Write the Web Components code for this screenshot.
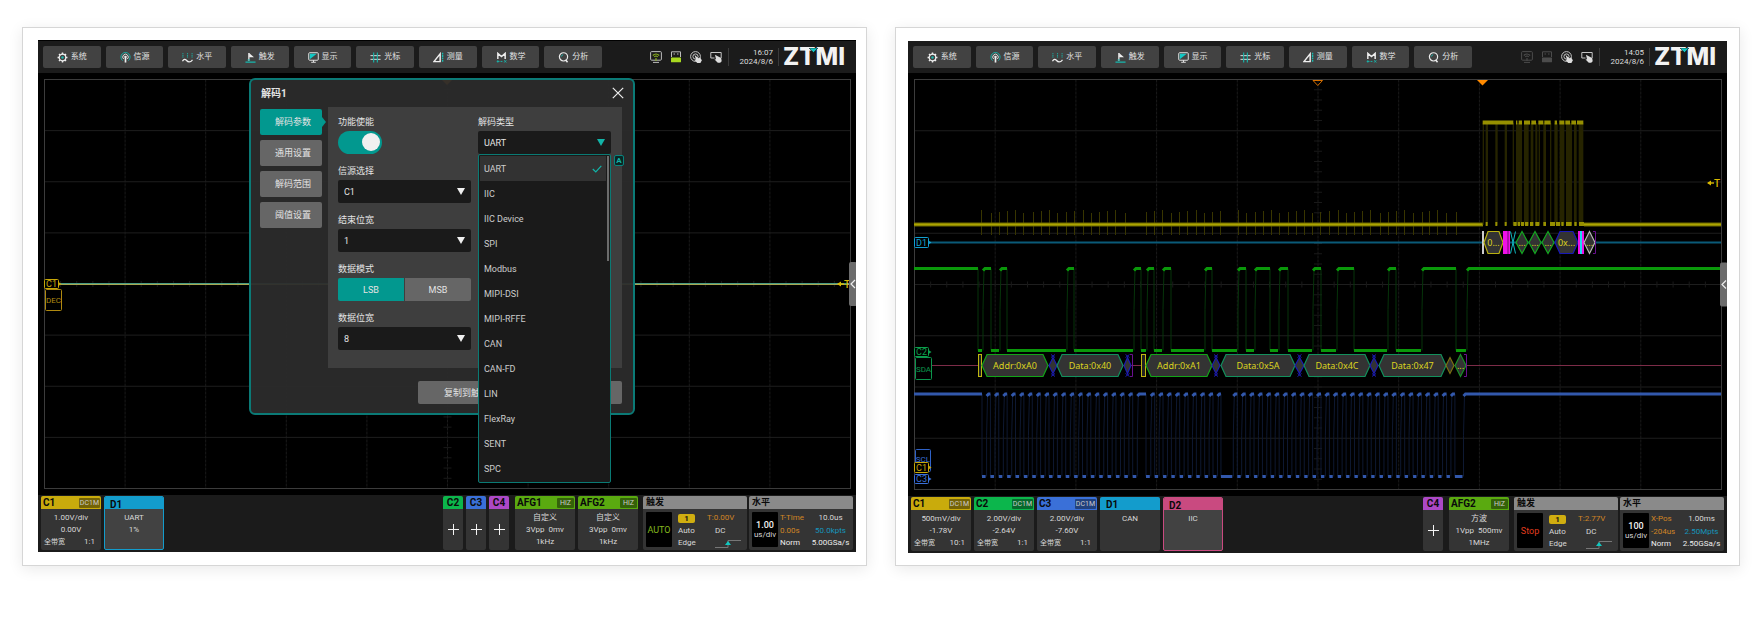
<!DOCTYPE html>
<html lang="zh-CN">
<head>
<meta charset="utf-8">
<meta name="viewport" content="width=device-width, initial-scale=1">
<title>ZTMI 示波器</title>
<style>
  body {
    margin: 0;
    background: #fff;
    font-family: Roboto, "Noto Sans CJK SC", sans-serif;
    font-size: 8px;
    color: #dcdcdc;
  }
  main {
    display: grid;
    grid-template-columns: 1fr 1fr;
    gap: 28px;
    align-items: stretch;
    padding: 27px 20px 40px 22px;
  }
</style>
</head>
<body>
<main>
  <scope-card style="--pad: 12px 10px 13px 15px">
    <scope-screen capped>
      <scope-topbar slot="top" time="16:07" date="2024/8/6" online></scope-topbar>
      <scope-plot scene="idle"></scope-plot>
      <decode-dialog slot="over"></decode-dialog>
      <channel-tile slot="left" name="C1" badge="DC1M" color="#c9ab0c" scale="1.00V/div" offset="0.00V" ratio="1:1"></channel-tile>
      <decode-tile slot="left" name="D1" color="#139ccc" kind="UART" info="1%" active></decode-tile>
      <add-tile slot="right" name="C2" color="#0cb64c"></add-tile>
      <add-tile slot="right" name="C3" color="#3a70d8"></add-tile>
      <add-tile slot="right" name="C4" color="#ac48c6"></add-tile>
      <afg-tile slot="right" first name="AFG1" wave="自定义" amp="3Vpp&nbsp; 0mv" freq="1kHz"></afg-tile>
      <afg-tile slot="right" name="AFG2" wave="自定义" amp="3Vpp&nbsp; 0mv" freq="1kHz"></afg-tile>
      <trigger-tile slot="right" state="AUTO" color="#84b81e" level="T:0.00V"></trigger-tile>
      <timebase-tile slot="right" scale="1.00" pos="T-Time" time="10.0us" delay="0.00s" points="50.0kpts" rate="5.00GSa/s"></timebase-tile>
    </scope-screen>
  </scope-card>
  <scope-card style="--pad: 13px 12px 12px 12px">
    <scope-screen>
      <scope-topbar slot="top" time="14:05" date="2024/8/6"></scope-topbar>
      <scope-plot scene="bus"></scope-plot>
      <channel-tile slot="left" name="C1" badge="DC1M" color="#c9ab0c" scale="500mV/div" offset="-1.78V" ratio="10:1"></channel-tile>
      <channel-tile slot="left" name="C2" badge="DC1M" color="#0cb64c" scale="2.00V/div" offset="-2.64V" ratio="1:1"></channel-tile>
      <channel-tile slot="left" name="C3" badge="DC1M" color="#3a70d8" scale="2.00V/div" offset="-7.60V" ratio="1:1"></channel-tile>
      <decode-tile slot="left" name="D1" color="#139ccc" kind="CAN"></decode-tile>
      <decode-tile slot="left" name="D2" color="#c94a80" kind="IIC" active></decode-tile>
      <add-tile slot="right" name="C4" color="#ac48c6"></add-tile>
      <afg-tile slot="right" first name="AFG2" wave="方波" amp="1Vpp&nbsp; 500mv" freq="1MHz"></afg-tile>
      <trigger-tile slot="right" state="Stop" color="#e03c1e" level="T:2.77V"></trigger-tile>
      <timebase-tile slot="right" scale="100" pos="X-Pos" time="1.00ms" delay="-204us" points="2.50Mpts" rate="2.50GSa/s"></timebase-tile>
    </scope-screen>
  </scope-card>
</main>

<script>
class Base extends HTMLElement {
  connectedCallback() {
    if (this.shadowRoot) return;
    this.attachShadow({ mode: "open" }).innerHTML =
      `<style>*{box-sizing:border-box}button,select,input{font:inherit;color:inherit;margin:0}${this.css()}</style>${this.html()}`;
  }
  a(n) { return this.getAttribute(n) || ""; }
  css() { return ""; }
  html() { return "<slot></slot>"; }
}

/* ---------- page card ---------- */
customElements.define("scope-card", class extends Base {
  css() { return `:host{display:block;box-sizing:border-box;min-width:0;border:1px solid #d6d6d6;background:#fff;padding:var(--pad);box-shadow:0 3px 14px rgba(0,0,0,.09)}`; }
});

/* ---------- instrument screen ---------- */
customElements.define("scope-screen", class extends Base {
  css() { return `
    :host{display:block;background:#000}
    :host([capped]){border-top:1px solid #000}
    .stage{position:relative;line-height:0}
    .bar{display:flex;justify-content:space-between;height:57px;padding:1px 3px 2px;background:#1b1b1b}
    .group{display:flex;gap:3px}`; }
  html() { return `<slot name="top"></slot>
    <div class="stage"><slot></slot><slot name="over"></slot></div>
    <div class="bar"><div class="group"><slot name="left"></slot></div><div class="group"><slot name="right"></slot></div></div>`; }
});

/* ---------- top bar ---------- */
const T = "#17b8ae", W = "#eee";
const ICONS = {
  gear: `<circle cx="6" cy="6" r="3.6" fill="none" stroke="${W}" stroke-width="1.3"/><path d="M6 .6v1.8M6 9.6v1.8M.6 6h1.8M9.6 6h1.8M2.2 2.2l1.2 1.2M8.6 8.6l1.2 1.2M9.8 2.2L8.6 3.4M3.4 8.6L2.2 9.8" stroke="${W}" stroke-width="1.6"/><circle cx="6" cy="6" r="1.3" fill="${T}"/>`,
  source: `<path d="M2.8 9.4a5 5 0 1 1 6.4 0" fill="none" stroke="${T}" stroke-width="1"/><path d="M4 7.7a3 3 0 1 1 4 0" fill="none" stroke="${W}" stroke-width="1"/><circle cx="6" cy="5.3" r="1.3" fill="${W}"/><path d="M6 5v6.5" stroke="${W}" stroke-width="1.8"/>`,
  level: `<path d="M1 1v5M6 1v5M11 1v5" stroke="${T}" stroke-width="1.2" stroke-dasharray="1 1"/><path d="M.5 10C2 7.500 3.500 7.500 5 9.300s4 2.500 6.500-.8" fill="none" stroke="${W}" stroke-width="1.400"/>`,
  flag: `<path d="M4.200 9.500V1" stroke="${W}" stroke-width="1.400"/><path d="M4.500 1L9.800 5.800H4.500z" fill="${W}"/><path d="M.5 11h11M2.800 8.800h2.800" stroke="${T}" stroke-width="1.200"/>`,
  display: `<rect x=".8" y=".8" width="10.400" height="8.200" rx="1" fill="#444" stroke="${W}" stroke-width="1"/><path d="M2 2h7.500L2 8z" fill="#12c8c4"/><path d="M3.500 11.200h5M6 9v2" stroke="${W}" stroke-width="1"/>`,
  cursor: `<path d="M.5 4h11M.5 8h11" stroke="${W}" stroke-width="1"/><path d="M4 .5v11M8 .5v11" stroke="${T}" stroke-width="1.200"/>`,
  measure: `<path d="M1 10.500L7.800 2v8.500z" fill="none" stroke="${W}" stroke-width="1.600"/><path d="M10.500 .8v10.400" stroke="${T}" stroke-width="1.500" stroke-dasharray="2 .6"/>`,
  math: `<path d="M2 7.500V1.500L6 5l4-3.500v6" fill="none" stroke="${W}" stroke-width="1.600"/><path d="M.8 10.300h3M5 10.300h2M9 9l2.200 2.500M11.200 9L9 11.500M2 9v2.600" stroke="${T}" stroke-width="1"/>`,
  analyse: `<circle cx="6" cy="5.300" r="4.500" fill="none" stroke="${W}" stroke-width="1.300"/><path d="M8.200 8.500l2.200 2.700" stroke="${W}" stroke-width="1.600"/><path d="M3.600 5a2.500 2.500 0 0 1 2-2" fill="none" stroke="${T}" stroke-width="1"/>`
};
customElements.define("menu-button", class extends Base {
  css() { return `
    :host{display:flex;flex:1}
    button{flex:1;display:flex;align-items:center;justify-content:center;gap:3px;height:22px;padding:0;border:0;border-radius:2px;background:#424242;font-size:8px;line-height:12px;color:#e2e2e2}
    svg{width:11px;height:11px}`; }
  html() { return `<button type="button"><svg viewBox="0 0 12 12" aria-hidden="true">${ICONS[this.a("icon")]}</svg><slot></slot></button>`; }
});
customElements.define("scope-topbar", class extends Base {
  css() { return `
    :host{display:flex;align-items:center;justify-content:space-between;height:32px;box-sizing:border-box;padding:0 9px 0 5px;background:#1b1b1b}
    nav{display:flex;gap:5px;width:559px}
    .side{display:flex;align-items:center}
    .icons{display:flex;gap:8px;padding-right:6px}
    .icons svg{width:12px;height:12px}
    time{display:block;width:51px;border:solid #3a3a3a;border-width:0 1px;padding-right:5px;text-align:right;font-size:8px;line-height:9px}
    .logo{position:relative;padding-left:4px;width:68px;font:800 24px/20px Inter,sans-serif;color:#f2f2f2}
    .logo svg{position:absolute;left:30px;top:1px;width:9px;height:5px}`; }
  html() {
    const on = this.hasAttribute("online"), c = on ? "#bbb" : "#4c4c4c", g = on ? "#8fb81c" : "#4c4c4c";
    const items = [["gear","系统"],["source","信源"],["level","水平"],["flag","触发"],["display","显示"],["cursor","光标"],["measure","测量"],["math","数学"],["analyse","分析"]];
    return `<nav>${items.map(([i, t]) => `<menu-button icon="${i}">${t}</menu-button>`).join("")}</nav>
    <div class="side"><div class="icons">
      <svg viewBox="0 0 12 12"><rect x=".6" y=".6" width="10.800" height="8.600" rx="1" fill="none" stroke="${c}"/><path d="M3 11.400h6" stroke="${c}"/><path d="M2.800 4.500Q6 1.500 9.200 4.500M4.300 5.800Q6 4.300 7.700 5.800M6 7v3" fill="none" stroke="${g}" stroke-width="1.100"/></svg>
      <svg viewBox="0 0 12 12"><path d="M1.500 6V.8h9V6" fill="none" stroke="${c}"/><path d="M3.500 3h1.500M7 3h1.500" stroke="${c}" stroke-width="1.200"/><rect x="1" y="6.500" width="10" height="4.800" rx=".6" fill="${on ? "#a8d820" : c}"/></svg>
      <svg viewBox="0 0 12 12" fill="none" stroke="#c4c4c4"><circle cx="5.500" cy="5.500" r="4.900"/><circle cx="5.500" cy="5.500" r="2.600"/><path d="M4.500 3.800l3.800 3.400 1.700-.6 1.900 2.700-1.500 2.700H7.200L4.600 9l1.400-.5z" fill="#ddd" stroke="none"/></svg>
      <svg viewBox="0 0 12 12" fill="none" stroke="#c4c4c4"><path d="M4.500 7H.8V1.500h10.400V7"/><path d="M5 3.800L8.200 5.600l3 1.400.5 3.200-1.500 1.600H7.800L4.500 8.600l1.500-.4z" fill="#ddd" stroke="none"/></svg>
    </div>
    <time>${this.a("time")}<br>${this.a("date")}</time>
    <div class="logo">ZTMI<svg viewBox="0 0 9 5" aria-hidden="true"><path d="M0 0h9L4.500 4.500z" fill="#10c4c0" stroke="#1b1b1b" stroke-width=".6"/></svg></div></div>`;
  }
});

/* ---------- plot ---------- */
const line = (x1, y1, x2, y2, c, w = 1, extra = "") => `<path d="M${x1} ${y1}L${x2} ${y2}" stroke="${c}" stroke-width="${w}" ${extra}/>`;
const box = (x, y, w, h, c, label, tail = true, size = 9) =>
  `<rect x="${x}" y="${y}" width="${w}" height="${h}" rx="1" fill="#000" stroke="${c}"/>` +
  (tail ? `<path d="M${x + w} ${y + h / 2 - 2}l3 2-3 2z" fill="${c}"/>` : "") +
  `<text x="${x + w / 2}" y="${y + h / 2 + 3}" text-anchor="middle" font-size="${size}" fill="${c}">${label}</text>`;
const hex = (x1, x2, y1, y2, c, label = "", cut = 5) => {
  const m = (y1 + y2) / 2;
  return `<path d="M${x1} ${m}L${x1 + cut} ${y1}H${x2 - cut}L${x2} ${m}L${x2 - cut} ${y2}H${x1 + cut}z" fill="#333" stroke="${c}" stroke-width="1.200"/>` +
    (label ? `<text class="bus" x="${(x1 + x2) / 2}" y="${m + 3}" text-anchor="middle">${label}</text>` : "");
};
const diamond = (x1, x2, y1, y2, c, label) => hex(x1, x2, y1, y2, c, label, (x2 - x1) / 2);
const grid = (w, h) => {
  let s = "", x0 = 6.5, x1 = w - 5.500, y0 = 6.500, y1 = h - 6.500, dx = (x1 - x0) / 10, dy = (y1 - y0) / 8;
  for (let i = 1; i < 10; i++) s += line(x0 + i * dx, y0, x0 + i * dx, y1, "#1a1a1a", 1, 'stroke-dasharray="3 1"');
  for (let i = 1; i < 8; i++) s += line(x0, y0 + i * dy, x1, y0 + i * dy, "#1e1e1e");
  for (let i = 1; i < 50; i++) s += line(x0 + i * dx / 5, h / 2 - 3, x0 + i * dx / 5, h / 2 + 3, "#191919");
  for (let i = 1; i < 40; i++) s += line(x0 + 5 * dx - 4, y0 + i * dy / 5, x0 + 5 * dx + 4, y0 + i * dy / 5, "#191919");
  return s + `<rect x="${x0}" y="${y0}" width="${x1 - x0}" height="${y1 - y0}" fill="none" stroke="#3c3c3c"/>`;
};
/* square wave: bright levels joined by dim edges */
const square = (highs, yh, yl, c, dim, w) => {
  let lv = "", ed = "";
  highs.forEach(([a, b], i) => {
    const prev = highs[i - 1];
    if (prev) {
      lv += `M${prev[1]} ${yl}H${a - 1}`;
      ed += `M${a} ${yl}V${(yh + yl) / 2}L${a + 1} ${yh}`;
      lv += `M${a} ${yh + 2}L${a + 2} ${yh}H${b}`;
    } else lv += `M${a} ${yh}H${b}`;
    if (i < highs.length - 1) ed += `M${b} ${yh}V${yl}`;
  });
  return `<path d="${ed}" fill="none" stroke="${dim}"/><path d="${lv}" fill="none" stroke="${c}" stroke-width="${w}"/>`;
};
const handle = (w, h) => `<rect x="${w - 7}" y="${h / 2 - 22}" width="8" height="44" rx="2" fill="#6c6c6c"/><path d="M${w - 1} ${h / 2 - 4}l-4 4 4 4" fill="none" stroke="#eee" stroke-width="1.200"/>`;
const level = (x, y) => `<path d="M${x + 1} ${y}h6" stroke="#d8b800" stroke-width="1.400"/><path d="M${x + 4} ${y - 2.500}l-4 2.500 4 2.500z" fill="#d8b800"/><text x="${x + 7}" y="${y + 4}" font-size="10" font-weight="500" fill="#d8b800">T</text>`;

const idleScene = () => {
  const w = 818, h = 422;
  return grid(w, h) +
    `<path d="M404 7h10l-5 5z" fill="#ff8a00"/>` +
    line(6, 210.500, 813, 210.500, "#4a9c84") + line(6, 211.500, 813, 211.500, "#a8a850") +
    box(6.500, 206.500, 14, 9, "#c8a808", "C1") + box(7.500, 216.500, 16, 21, "#b08a10", "DEC", false, 8) +
    level(799, 211) + handle(w, h);
};
const busScene = () => {
  const w = 819, h = 423;
  let s = grid(w, h);
  /* C1 */
  const spikes = [274,303,327,351,375,400,428,453,477,502,527,553,578,603,627,651,675,704,767,791,816,842,867,891,917,941,965,991,1044,1068,1094,1118,1143,1168,1193,1217,1241,1266,1291,1318,1343,1367,1391,1416,1440,1469,1493,1517,1541,1570,1595,1618,1642,1667,1697].map(p => Math.round(p / 3) - 18);
  s += `<path d="${spikes.map((x, i) => `M${x + .5} ${137 + i * 3 % 4}V162`).join("")}" stroke="#383500"/>`;
  s += line(6, 151.500, 575, 151.500, "#6c6800", 4) + line(6, 151.500, 575, 151.500, "#aca400", 2);
  s += line(676, 151.500, 813, 151.500, "#6c6800", 4) + line(676, 151.500, 813, 151.500, "#aca400", 2);
  const bx = p => p / 3 + 412;
  const bars = [[488,492],[497,504],[526,533],[554,561],[578,582],[588,606],[612,626],[632,640],[646,652],[656,660],[670,678],[690,694],[703,713],[719,733],[738,756],[762,770],[776,790]];
  bars.forEach(([a, b]) => s += `<rect x="${bx(a)}" y="50" width="${(b - a) / 3}" height="102" fill="#262400"/>`);
  [[488,580],[588,592],[596,606],[612,630],[634,648],[655,670],[673,692],[704,711],[718,733],[736,750],[754,768],[771,790]].forEach(([a, b]) => s += line(bx(a), 49.500, bx(b), 49.500, "#979000", 4));
  [[497,503],[526,532],[554,560],[580,590],[593,600],[603,612],[615,625],[630,640],[646,658],[670,678],[690,705],[708,720],[724,731],[738,755],[763,770],[777,792]].forEach(([a, b]) => s += line(bx(a), 151, bx(b), 151, "#979000", 4));
  /* D1 */
  s += line(22, 169.500, 813, 169.500, "#0a5a78", 2) + box(6.500, 164.500, 14, 10, "#12a0d0", "D1");
  /* C2 */
  s += square([[6,70],[75,83],[92,99],[159,166],[226,233],[239,246],[255,263],[297,304],[330,338],[347,362],[371,380],[405,413],[429,446],[480,488],[514,548],[559,813]], 195.500, 277.500, "#0a980a", "#06340a", 3);
  s += line(23, 292.500, 813, 292.500, "#7c2c48");
  s += box(6.500, 274.500, 14, 9, "#0ba04c", "C2") + box(7.500, 284.500, 16, 22, "#0b964c", "SDA", false, 8);
  /* C3 */
  const clk = [[6, 74]];
  for (let k = 0; k < 18; k++) clk.push([78.600 + k * 8.370, 82.400 + k * 8.370]);
  clk.push([229.300, 238]);
  for (let k = 0; k < 9; k++) clk.push([242.800 + k * 8.330, 246.700 + k * 8.330 - (k === 8 ? .4 : 0)]);
  for (let k = 0; k < 27; k++) clk.push([325.300 + k * 8.370, 329.300 + k * 8.370]);
  clk.push([555.500, 813]);
  s += square(clk, 321, 403.500, "#3258ac", "#0e1932", 3);
  s += `<rect x="7.500" y="376.500" width="15" height="22" rx="1" fill="#000" stroke="#2f62c8"/><text x="15" y="389" text-anchor="middle" font-size="8" fill="#3a70d8">SCL</text>`;
  s += box(6.500, 389.500, 14, 10, "#c8a808", "C1") + box(6.500, 401.500, 14, 9, "#3a70d8", "C3");
  /* D1 frames */
  const a = 158.500, b = 180.500;
  s += `<rect x="574" y="158" width="2" height="23" fill="#ccc"/>` + hex(576, 595, a, b, "#b8b010", "0...", 4);
  s += `<rect x="595" y="158" width="7" height="23" fill="#f010e8"/><rect x="599.500" y="158" width="1" height="23" fill="#700870"/>`;
  s += `<path d="M602.500 ${a}L607.500 ${b}M607.500 ${a}L602.500 ${b}" stroke="#10b8c0"/>`;
  s += [[608,620],[621,633],[634,646]].map(([p, q]) => diamond(p, q, a, b, "#14a820", "...")).join("") + hex(647, 670, a, b, "#1818b8", "0x...", 5);
  s += `<rect x="670" y="158" width="6" height="23" fill="#f010e8"/><rect x="672" y="158" width="2" height="23" fill="#20d8f0"/>` + diamond(676, 687, a, b, "#b8b8b8", "...");
  s += `<path d="M685 ${a}h2.500V${b}h-2.500" fill="none" stroke="#6a1090"/>`;
  /* D2 frames */
  const c = 281.500, d = 303.500, G = "#12a418", E = "#12905c", B = "#1c1cb0";
  const link = (p, q) => `<path d="M${(p + q) / 2 - 2} ${c}l4 3M${(p + q) / 2 + 2} ${c}l-4 3M${(p + q) / 2 - 2} ${d}l4-3M${(p + q) / 2 + 2} ${d}l-4-3" stroke="${B}"/>` + diamond(p, q, c + 3, d - 3, B);
  s += `<rect x="70.500" y="${c}" width="3" height="22" fill="#222" stroke="#c0b810"/>` + hex(74, 140, c, d, G, "Addr:0xA0") + link(141, 149) + hex(149, 215, c, d, E, "Data:0x40") + link(216, 223);
  s += `<path d="M222 ${c}h2.500V${d}h-2.500" fill="none" stroke="#6a1090"/>`;
  s += `<rect x="233.500" y="${c}" width="4" height="22" fill="#222" stroke="#c0b810"/>` + hex(238, 304, c, d, G, "Addr:0xA1") + link(304, 312) + hex(313, 387, c, d, E, "Data:0x5A") + link(387, 396);
  s += hex(396, 462, c, d, E, "Data:0x4C") + link(462, 470) + hex(471, 538, c, d, E, "Data:0x47") + diamond(538, 546, c + 3, d - 3, "#7c7010") + diamond(547, 558, c, d, "#189028", "...");
  s += `<path d="M556 ${c}h2.500V${d}h-2.500" fill="none" stroke="#6a1090"/>`;
  s += `<path d="M405 7.500h9.500l-4.700 5z" fill="none" stroke="#d87000"/><path d="M569 7h11l-5.500 5.500z" fill="#ff8a00"/>`;
  return s + level(799, 110) + handle(w, h);
};
customElements.define("scope-plot", class extends Base {
  css() { return `:host{display:block}svg{display:block;width:100%;height:auto;background:#000}.bus{font-family:"Noto Sans",sans-serif;font-size:9px;fill:#dcd420}`; }
  html() {
    const idle = this.a("scene") === "idle";
    return `<svg viewBox="0 0 ${idle ? "818 422" : "819 423"}" role="img" aria-label="波形">${idle ? idleScene() : busScene()}</svg>`;
  }
});

/* ---------- decode dialog ---------- */
customElements.define("decode-dialog", class extends Base {
  css() { return `
    :host{display:block;position:absolute;left:211px;top:5px;width:386px;box-sizing:border-box;border:2px solid #0b7a76;border-radius:6px;background:rgba(43,43,43,.95);line-height:12px;font-size:9px;color:#e4e4e4}
    header{display:flex;justify-content:space-between;align-items:center;height:27px;padding:0 9px}
    h2{margin:0;padding-left:1px;font-size:10px;font-weight:700;line-height:14px}
    .x{width:12px;height:14px;padding:0 0 2px;border:0;background:none}
    .x svg{display:block;width:12px;height:12px}
    .body{display:flex;gap:6px;padding:0 11px 0 9px}
    nav{display:flex;flex-direction:column;gap:5px;width:62px;padding-top:2px}
    nav button{position:relative;height:26px;border:0;border-radius:2px;background:#666;padding:0 0 0 4px}
    nav button.on{background:#02988f}
    nav button.on::after{content:"";position:absolute;left:62px;top:8px;border:solid transparent;border-width:5px 0 5px 4px;border-left-color:#02988f}
    .panel{flex:1;display:grid;grid-template-columns:133px 133px;gap:7px;height:261px;padding:6px 10px;background:#3e3e3e}
    .col{display:flex;flex-direction:column;gap:8px}
    .field{position:relative;display:flex;flex-direction:column;align-items:flex-start}
    .field>label,.field>.cap{line-height:18px}
    select{appearance:none;width:100%;height:23px;padding:0 6px;border:0;border-radius:2px;background:#1a1a1a}
    .field.sel::after{content:"";position:absolute;right:6px;bottom:8px;border:solid transparent;border-width:7px 4px 0;border-top-color:var(--arrow,#f0f0f0)}
    input{appearance:none;width:44px;height:23px;border-radius:12px;background:#02988f;padding:2px 2px 3px 24px}
    input::before{content:"";display:block;width:18px;height:18px;border-radius:9px;background:#f0f0f0}
    .seg{display:flex;width:100%;gap:1px}
    .seg button{flex:1;height:23px;border:0;border-radius:0 2px 2px 0;background:#666;padding:0}
    .seg button.on{background:#02988f;border-radius:2px 0 0 2px}
    .list{position:absolute;z-index:2;left:0;top:41px;width:133px;margin:0;padding:1px 4px 1px 1px;list-style:none;border:1px solid #0a7a74;border-radius:2px;background:#1a1a1a;color:#ccc}
    .list li{display:flex;justify-content:space-between;align-items:center;height:25px;padding:0 4px}
    .list li.on{background:#323232}
    .list svg{width:10px;height:8px}
    .list::after{content:"";position:absolute;right:1px;top:1px;width:2px;height:105px;background:#6c6c6c}
    .badge{position:absolute;left:136px;top:42px;width:10px;height:11px;border:1px solid #08847e;border-radius:2px;background:#0a2624;color:#14b0a6;font-size:8px;font-weight:700;line-height:10px;text-align:center}
    footer{display:flex;justify-content:flex-end;gap:8px;padding:13px 11px 9px}
    footer button{width:98px;height:23px;border:0;border-radius:2px;background:#666;padding:0 0 0 26px;text-align:left;white-space:nowrap}`; }
  sel(id, label, value) {
    return `<div class="field sel"><label for="${id}">${label}</label><select id="${id}"><option>${value}</option></select></div>`;
  }
  html() {
    const types = ["UART","IIC","IIC Device","SPI","Modbus","MIPI-DSI","MIPI-RFFE","CAN","CAN-FD","LIN","FlexRay","SENT","SPC"];
    return `<header><h2>解码1</h2><button class="x" type="button" aria-label="关闭"><svg viewBox="0 0 12 12"><path d="M.8.8l10.400 10.400M11.200.8L.8 11.200" stroke="#eee" stroke-width="1.200"/></svg></button></header>
    <div class="body">
      <nav><button type="button" class="on">解码参数</button><button type="button">通用设置</button><button type="button">解码范围</button><button type="button">阈值设置</button></nav>
      <div class="panel">
        <div class="col">
          <div class="field"><label for="en">功能使能</label><input id="en" type="checkbox" role="switch" checked></div>
          ${this.sel("src", "信源选择", "C1")}
          ${this.sel("stop", "结束位宽", "1")}
          <div class="field"><span class="cap">数据模式</span><div class="seg"><button type="button" class="on">LSB</button><button type="button">MSB</button></div></div>
          ${this.sel("bits", "数据位宽", "8")}
        </div>
        <div class="col">
          <div class="field sel" style="--arrow:#12b4a8"><label for="type">解码类型</label><select id="type"><option>UART</option></select>
            <ul class="list" role="listbox" aria-label="解码类型">${types.map((t, i) => `<li role="option" class="${i ? "" : "on"}">${t}${i ? "" : `<svg viewBox="0 0 10 8"><path d="M.8 4l3 3L9.300.8" fill="none" stroke="#12b4a8" stroke-width="1.200"/></svg>`}</li>`).join("")}</ul>
            <span class="badge">A</span>
          </div>
        </div>
      </div>
    </div>
    <footer><button type="button">复制到触</button><button type="button" aria-label="复制"></button></footer>`;
  }
});

/* ---------- bottom tiles ---------- */
const TILE = `
  :host{display:block;flex:none;width:60px;height:54px;box-sizing:border-box;background:#343434;font-size:8px;line-height:12px;color:#d8d8d8;border-radius:2px;overflow:hidden}
  .h{display:flex;justify-content:space-between;align-items:center;height:13px;padding:0 1px 0 2px;background:var(--c);color:#0a0a0a;font:700 10px/13px Roboto,"Noto Sans CJK SC",sans-serif}
  .tag{padding:0 1px;border-radius:1px;background:rgba(0,0,0,.42);color:#ccc;font-size:7px;font-weight:400;line-height:10px}
  .b{padding-top:3px;text-align:center}`;
customElements.define("channel-tile", class extends Base {
  css() { return TILE + `:host{--c:${this.a("color")}}.r{display:flex;justify-content:space-between;padding:0 6px 0 3px}.r span:first-child{font-size:7px}`; }
  html() { return `<div class="h">${this.a("name")}<span class="tag">${this.a("badge")}</span></div><div class="b">${this.a("scale")}<br>${this.a("offset")}<div class="r"><span>全带宽</span><span>${this.a("ratio")}</span></div></div>`; }
});
customElements.define("decode-tile", class extends Base {
  css() { return TILE + `:host{--c:${this.a("color")}}:host([active]){border:1px solid ${this.a("color")};background:#424242}.h{padding:2px 0 0 6px}:host([active]) .h{height:12px;padding-left:5px}`; }
  html() { return `<div class="h">${this.a("name")}</div><div class="b">${this.a("kind")}<br>${this.a("info")}</div>`; }
});
customElements.define("add-tile", class extends Base {
  css() { return TILE + `:host{width:20px;--c:${this.a("color")}}.h{justify-content:center;padding:0}button{display:block;width:20px;height:40px;padding:0;border:0;background:none}svg{display:block;margin:0 auto;width:11px;height:11px}`; }
  html() { return `<div class="h">${this.a("name")}</div><button type="button" aria-label="添加${this.a("name")}"><svg viewBox="0 0 11 11"><path d="M5.500 0v11M0 5.500h11" stroke="#f4f4f4"/></svg></button>`; }
});
customElements.define("afg-tile", class extends Base {
  css() { return TILE + `:host{--c:#5aaa10}:host([first]){margin-left:3px}.tag{padding:0 3px}`; }
  html() { return `<div class="h">${this.a("name")}<span class="tag">HiZ</span></div><div class="b">${this.a("wave")}<br>${this.a("amp")}<br>${this.a("freq")}</div>`; }
});
const WIDE = TILE + `
  :host{width:104px;--c:#8a8a8a}
  .h{font-size:9px;padding-left:3px}
  .g{display:grid;gap:0 4px;padding:3px 3px 0}
  .k{display:flex;flex-direction:column;justify-content:center;align-items:center;width:26px;height:35px;border-radius:1px;background:#000;line-height:10px}
  .rows{display:grid;grid-template-rows:12px 13px 12px;align-items:center;white-space:nowrap}
  .o{color:#d08424}`;
customElements.define("trigger-tile", class extends Base {
  css() { return WIDE + `:host{margin-left:2px}.g{grid-template-columns:26px 1fr}.k{color:${this.a("color")};font-size:9px}.rows{grid-template-columns:29px 1fr;padding-left:2px}.n{width:17px;height:9px;border-radius:2px;background:#d0ae10;color:#111;font-weight:700;line-height:9px;text-align:center}.d{padding-left:8px}.d svg{display:block;width:26px;height:9px}`; }
  html() { return `<div class="h">触发</div><div class="g"><div class="k">${this.a("state")}</div><div class="rows"><span class="n">1</span><span class="o">${this.a("level")}</span><span>Auto</span><span class="d">DC</span><span>Edge</span><span class="d"><svg viewBox="0 0 26 9"><path d="M0 8.500h13v-7h13" fill="none" stroke="#777"/><path d="M10 6l3-4 3 4z" fill="#10c8c0"/></svg></span></div></div>`; }
});
customElements.define("timebase-tile", class extends Base {
  css() { return WIDE + `:host{margin-left:-1px}.g{grid-template-columns:26px 1fr;gap:0 2px}.k b{font-weight:500;font-size:9px;color:#f0f0f0}.rows{grid-template-columns:31px 1fr}.rows span:nth-child(even){text-align:center}.p{color:#1494bc}.w{color:#eee}`; }
  html() { return `<div class="h">水平</div><div class="g"><div class="k"><b>${this.a("scale")}</b>us/div</div><div class="rows"><span class="o">${this.a("pos")}</span><span>${this.a("time")}</span><span class="o">${this.a("delay")}</span><span class="p">${this.a("points")}</span><span class="w">Norm</span><span class="w">${this.a("rate")}</span></div></div>`; }
});
</script>
</body>
</html>
